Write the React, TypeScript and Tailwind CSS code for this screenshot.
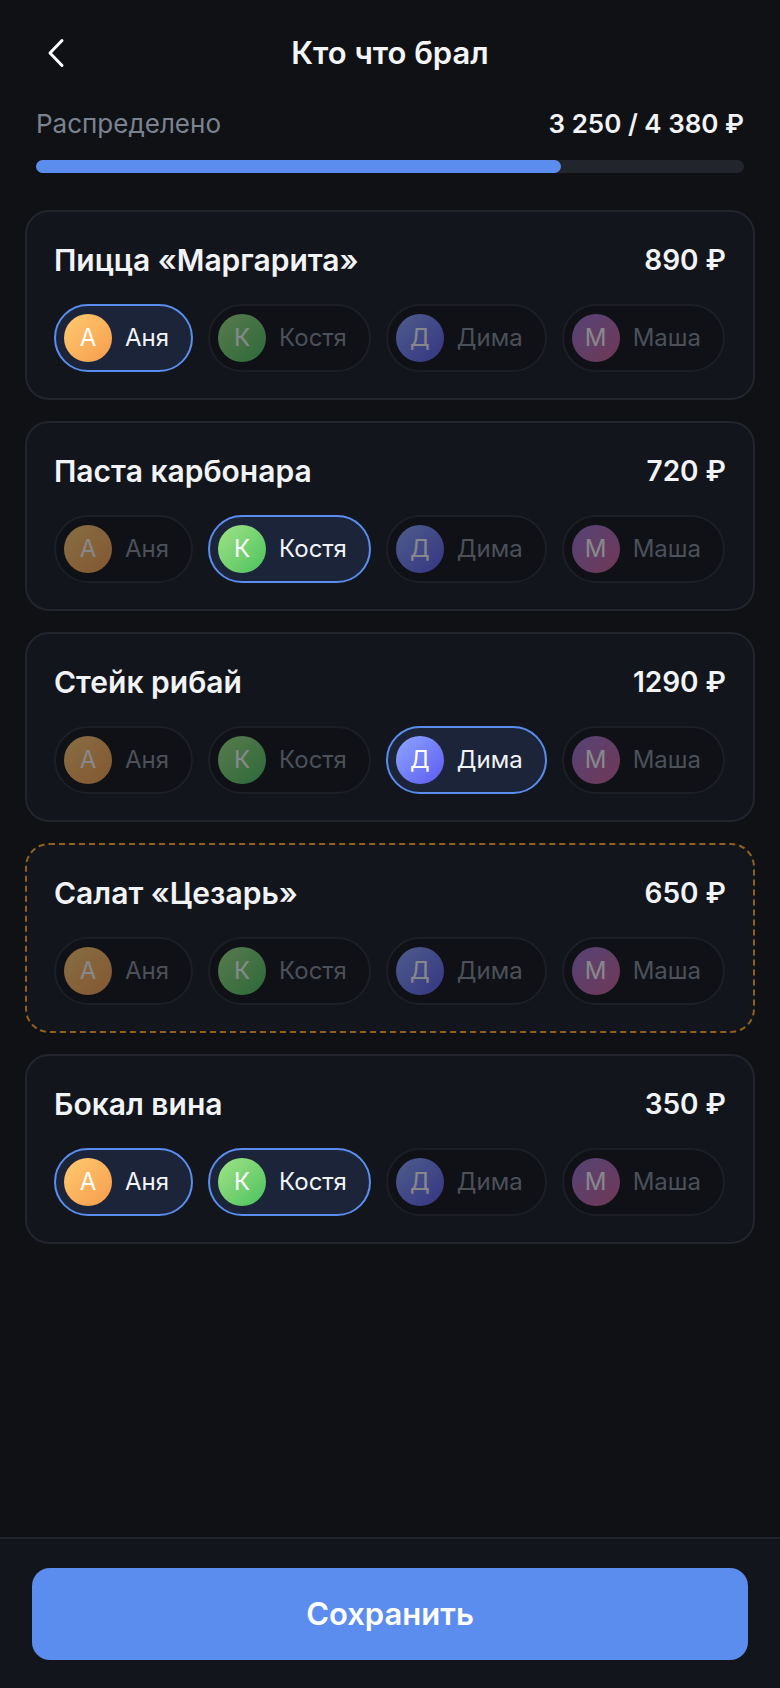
import { useState } from "react";

type Person = {
  id: string;
  letter: string;
  name: string;
  gradient: string;
};

type Item = {
  name: string;
  price: string;
  selected: string[];
  unassigned?: boolean;
};

const PEOPLE: Person[] = [
  { id: "a", letter: "А", name: "Аня", gradient: "from-[#ffca70] to-[#f69c4c]" },
  { id: "k", letter: "К", name: "Костя", gradient: "from-[#9fe387] to-[#47c25d]" },
  { id: "d", letter: "Д", name: "Дима", gradient: "from-[#8fa6ff] to-[#5d57ee]" },
  { id: "m", letter: "М", name: "Маша", gradient: "from-[#9a74d6] to-[#cf5d94]" },
];

const INITIAL_ITEMS: Item[] = [
  { name: "Пицца «Маргарита»", price: "890 ₽", selected: ["a"] },
  { name: "Паста карбонара", price: "720 ₽", selected: ["k"] },
  { name: "Стейк рибай", price: "1290 ₽", selected: ["d"] },
  { name: "Салат «Цезарь»", price: "650 ₽", selected: [], unassigned: true },
  { name: "Бокал вина", price: "350 ₽", selected: ["a", "k"] },
];

const PersonChip = ({
  person,
  active,
  onClick,
}: {
  person: Person;
  active: boolean;
  onClick: () => void;
}) => (
  <button
    onClick={onClick}
    className={
      active
        ? "flex shrink-0 items-center gap-[13px] rounded-full border-2 border-[#5b8def] bg-[#1b2439] p-2 pr-[22px]"
        : "flex shrink-0 items-center gap-[13px] rounded-full border-2 border-[#1c1f25] bg-[#0f1116] p-2 pr-[22px]"
    }
  >
    <span
      className={`flex h-12 w-12 items-center justify-center rounded-full bg-linear-to-br ${person.gradient} text-[24px] text-white ${
        active ? "" : "opacity-50"
      }`}
    >
      {person.letter}
    </span>
    <span
      className={
        active ? "text-[24px] text-[#f2f3f5]" : "text-[24px] text-[#4b5059]"
      }
    >
      {person.name}
    </span>
  </button>
);

export default function App() {
  const [items, setItems] = useState<Item[]>(INITIAL_ITEMS);

  const toggle = (index: number, id: string) => {
    setItems(
      items.map((item, i) => {
        if (i !== index) return item;
        const selected = item.selected.includes(id)
          ? item.selected.filter((s) => s !== id)
          : [...item.selected, id];
        return { ...item, selected };
      })
    );
  };

  return (
    <div className="flex min-h-screen flex-col bg-[#0f1115] font-['Inter','Noto_Sans',sans-serif] text-white">
      <header className="grid h-[106px] grid-cols-[1fr_auto_1fr] items-center">
        <button className="flex items-center pl-[46px]">
          <svg width="20" height="30" viewBox="0 0 20 30" fill="none">
            <path
              d="M16 2.5 L4 15 L16 27.5"
              stroke="white"
              strokeWidth="3"
              strokeLinecap="round"
              strokeLinejoin="round"
            />
          </svg>
        </button>
        <h1 className="text-[31px] font-semibold leading-9 text-[#f4f5f7]">
          Кто что брал
        </h1>
        <div />
      </header>

      <section className="px-9 pt-px">
        <div className="flex h-8 items-center justify-between">
          <span className="text-[26px] text-[#7c8390]">Распределено</span>
          <span className="text-[26px] font-semibold text-[#f2f3f5]">
            3 250 / 4 380 ₽
          </span>
        </div>
        <div className="mt-[21px] h-[13px] w-full rounded-full bg-[#22252b]">
          <div className="h-full w-[74.2%] rounded-full bg-[#5b8def]" />
        </div>
      </section>

      <main className="mt-[37px] flex flex-col gap-[21px] px-[25px]">
        {items.map((item, index) => (
          <div
            key={item.name}
            className={
              item.unassigned
                ? "rounded-[24px] border-2 border-dashed border-[#92601c] bg-[#12151c] pb-[26px] pl-[27px] pr-[27px] pt-[30px]"
                : "rounded-[24px] border-2 border-[#22252c] bg-[#12151c] pb-[26px] pl-[27px] pr-[27px] pt-[30px]"
            }
          >
            <div className="flex h-9 items-center justify-between">
              <span className="text-[30px] font-semibold text-[#f2f3f5]">
                {item.name}
              </span>
              <span className="text-[28px] font-semibold text-[#f2f3f5]">
                {item.price}
              </span>
            </div>
            <div className="mt-[26px] flex gap-[15px]">
              {PEOPLE.map((person) => (
                <PersonChip
                  key={person.id}
                  person={person}
                  active={item.selected.includes(person.id)}
                  onClick={() => toggle(index, person.id)}
                />
              ))}
            </div>
          </div>
        ))}
      </main>

      <footer className="mt-auto border-t-2 border-[#20232a] bg-[#12151b] px-8 pb-7 pt-[29px]">
        <button className="flex h-[92px] w-full items-center justify-center rounded-[18px] bg-[#5b8def] text-[31px] font-semibold text-white">
          Сохранить
        </button>
      </footer>
    </div>
  );
}
